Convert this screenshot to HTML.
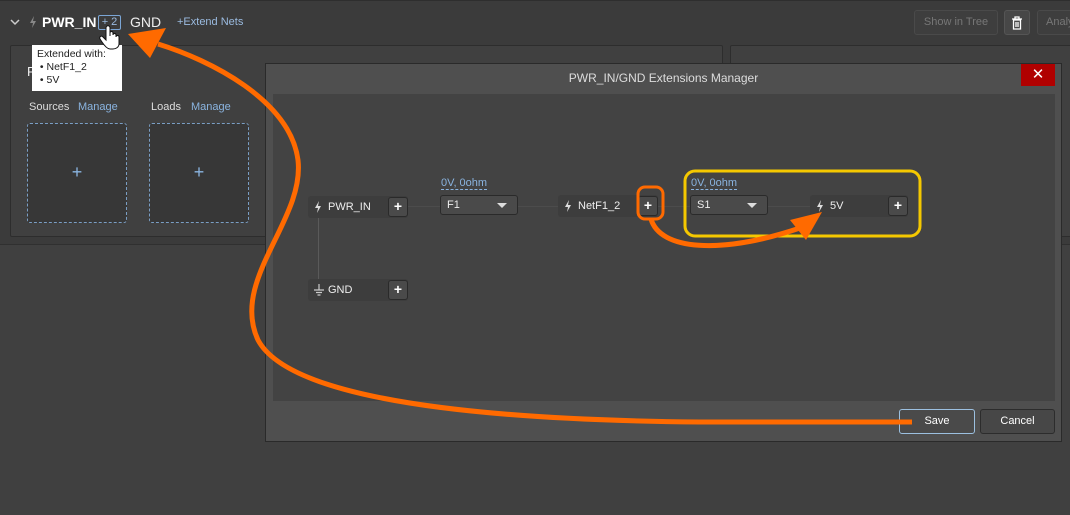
<!DOCTYPE html>
<html><head><meta charset="utf-8"><style>
body{margin:0;width:1070px;height:515px;background:#404040;position:relative;overflow:hidden;font-family:"Liberation Sans",sans-serif;color:#ddd}
.a{position:absolute}
.btn{position:absolute;border:1px solid #2c2c2c;border-radius:3px;background:#474747;color:#fff;font-size:11px;text-align:center;box-sizing:border-box}
.node{position:absolute;height:22px;background:#3d3d3d;border-radius:3px;font-size:11px;color:#eee;line-height:22px;box-sizing:border-box;padding-left:20px}
.plus{position:absolute;right:0;top:1px;width:20px;height:20px;background:#4a4a4a;border:1px solid #2a2a2a;border-radius:3px;box-sizing:border-box;text-align:center;line-height:17px;font-weight:bold;font-size:14px;color:#fff}
.dd{position:absolute;height:20px;background:#4a4a4a;border:1px solid #2a2a2a;border-radius:3px;box-sizing:border-box;font-size:11px;line-height:18px;padding-left:6px;color:#eee}
.dd:after{content:"";position:absolute;right:10px;top:7px;border-left:5px solid transparent;border-right:5px solid transparent;border-top:5px solid #ddd}
.val{position:absolute;font-size:11px;color:#8ab4e0;border-bottom:1px dashed #8ab4e0;line-height:12px}
.bolt{position:absolute;left:6px;top:5px}
</style></head><body>
<div class="a" style="left:0;top:0;width:1070px;height:1px;background:#2e2e2e"></div>
<div class="a" style="left:0;top:1px;width:1070px;height:243px;background:#3b3b3b"></div>
<div class="a" style="left:0;top:244px;width:1070px;height:1px;background:#303030"></div>
<svg class="a" style="left:10px;top:18px" width="10" height="8"><path d="M1 2 L5 6 L9 2" fill="none" stroke="#ccc" stroke-width="1.5"/></svg>
<svg class="a" style="left:29px;top:16px" width="8" height="12"><path d="M5 0 L1 7 L4 7 L3 12 L7 5 L4 5 Z" fill="#888"/></svg>
<div class="a" style="left:42px;top:14px;font-size:14px;font-weight:bold;color:#fff">PWR_IN</div>
<div class="a" style="left:98px;top:15px;width:23px;height:15px;border:1px solid #7ba6d6;border-radius:2px;box-sizing:border-box;font-size:11px;color:#9bbbe0;text-align:center;line-height:13px">+ 2</div>
<div class="a" style="left:130px;top:14px;font-size:14px;color:#eee">GND</div>
<div class="a" style="left:177px;top:16px;font-size:11px;color:#9bbbe0">+Extend Nets</div>
<div class="btn" style="left:914px;top:10px;width:84px;height:25px;line-height:23px;color:#777;background:#3e3e3e;border-color:#4a4a4a">Show in Tree</div>
<div class="btn" style="left:1004px;top:10px;width:26px;height:25px;border-color:#555"><svg width="12" height="14" style="margin-top:5px"><path d="M1 3 H11 M4 3 V1 H8 V3 M2.5 4 H9.5 V13 H2.5 Z M5 6 V11 M7 6 V11" fill="none" stroke="#fff" stroke-width="1.3"/></svg></div>
<div class="btn" style="left:1037px;top:10px;width:50px;height:25px;line-height:23px;color:#777;background:#3e3e3e;border-color:#4a4a4a;text-align:left;padding-left:8px">Analy</div>
<div class="a" style="left:10px;top:45px;width:711px;height:190px;border:1px solid #2d2d2d;background:#404040;border-radius:2px"></div>
<div class="a" style="left:730px;top:45px;width:350px;height:190px;border:1px solid #2d2d2d;background:#404040;border-radius:2px"></div>
<div class="a" style="left:27px;top:64px;font-size:13px;color:#eee">P</div>
<div class="a" style="left:29px;top:101px;font-size:11px">Sources</div><div class="a" style="left:78px;top:101px;font-size:11px;color:#8ab4e0">Manage</div>
<div class="a" style="left:151px;top:101px;font-size:11px">Loads</div><div class="a" style="left:191px;top:101px;font-size:11px;color:#8ab4e0">Manage</div>
<div class="a" style="left:27px;top:123px;width:100px;height:100px;border:1px dashed #7a9ec4;border-radius:3px;box-sizing:border-box;background:#373737;color:#8ab4e0;font-size:18px;text-align:center;line-height:96px">+</div>
<div class="a" style="left:149px;top:123px;width:100px;height:100px;border:1px dashed #7a9ec4;border-radius:3px;box-sizing:border-box;background:#373737;color:#8ab4e0;font-size:18px;text-align:center;line-height:96px">+</div>
<div class="a" style="left:32px;top:45px;width:90px;height:46px;background:#fff;color:#222;font-size:10.5px;line-height:13px;padding:3px 5px;box-sizing:border-box">Extended with:<br>&nbsp;• NetF1_2<br>&nbsp;• 5V</div>
<div class="a" style="left:265px;top:63px;width:797px;height:379px;background:#4f4f4f;border:1px solid #2a2a2a;box-sizing:border-box"></div>
<div class="a" style="left:265px;top:71px;width:797px;text-align:center;font-size:12px;color:#ddd">PWR_IN/GND Extensions Manager</div>
<div class="a" style="left:1021px;top:64px;width:34px;height:22px;background:#b00000;color:#fff;text-align:center;font-size:15px;line-height:22px">✕</div>
<div class="a" style="left:273px;top:94px;width:782px;height:307px;background:#434343"></div>
<div class="btn" style="left:899px;top:409px;width:76px;height:25px;line-height:23px;border-color:#9cc0e0;background:#4a4a4a">Save</div>
<div class="btn" style="left:980px;top:409px;width:75px;height:25px;line-height:23px">Cancel</div>
<div class="a" style="left:318px;top:218px;width:1px;height:62px;background:#5a5a5a"></div>
<div class="a" style="left:408px;top:206px;width:405px;height:1px;background:#4c4c4c"></div>
<div class="node" style="left:308px;top:196px;width:100px">PWR_IN<svg class="bolt" width="8" height="12"><path d="M5 0 L1 7 L4 7 L3 12 L7 5 L4 5 Z" fill="#ddd"/></svg><div class="plus">+</div></div>
<div class="node" style="left:308px;top:279px;width:100px">GND<svg class="bolt" width="10" height="12"><path d="M5 0 V6 M0 6 H10 M2 8.5 H8 M3.5 11 H6.5" stroke="#ccc" stroke-width="1.2"/></svg><div class="plus">+</div></div>
<div class="val" style="left:441px;top:177px">0V, 0ohm</div>
<div class="dd" style="left:440px;top:195px;width:78px">F1</div>
<div class="node" style="left:558px;top:195px;width:100px">NetF1_2<svg class="bolt" width="8" height="12"><path d="M5 0 L1 7 L4 7 L3 12 L7 5 L4 5 Z" fill="#ddd"/></svg><div class="plus">+</div></div>
<div class="val" style="left:691px;top:177px">0V, 0ohm</div>
<div class="dd" style="left:690px;top:195px;width:78px">S1</div>
<div class="node" style="left:810px;top:195px;width:98px">5V<svg class="bolt" width="8" height="12"><path d="M5 0 L1 7 L4 7 L3 12 L7 5 L4 5 Z" fill="#ddd"/></svg><div class="plus">+</div></div>
<svg class="a" style="left:0;top:0" width="1070" height="515">
<rect x="685" y="171" width="235" height="65" rx="10" fill="none" stroke="#f5c800" stroke-width="3"/>
<rect x="638" y="187" width="25" height="32" rx="7" fill="none" stroke="#ff6a00" stroke-width="3"/>
<path d="M651 219 C 660 250, 720 255, 800 228" fill="none" stroke="#ff6a00" stroke-width="5"/>
<polygon points="822,212 790,220 806,240" fill="#ff6a00"/>
<path d="M912 422 L 700 422 C 480 420, 290 400, 258 340 C 230 280, 305 220, 298 160 C 290 100, 210 60, 158 44" fill="none" stroke="#ff6a00" stroke-width="5"/>
<polygon points="128,34 166,28 150,58" fill="#ff6a00"/>
<path d="M106 28 C106 25 110 25 110 28 V36 V33 C110 31 113 31 113 33 V35 C113 33 116 33 116 35 V37 C116 35 119 35 119 37 V44 C119 47 116 49 113 49 H110 C107 49 104 45 102 42 L100 39 C99 37 101 35 103 37 L106 40 Z" fill="#fff" stroke="#111" stroke-width="1"/>
</svg>
</body></html>
